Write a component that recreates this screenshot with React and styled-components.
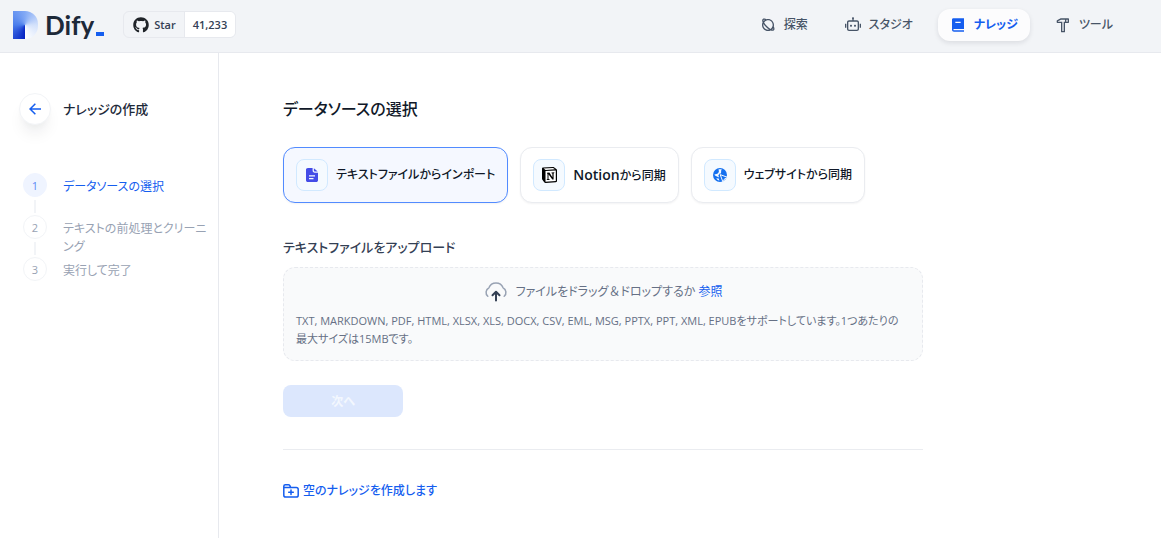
import { useState } from "react";
import styled, { createGlobalStyle, css } from "styled-components";
import { FaGithub } from "react-icons/fa";
import {
  RiArrowLeftLine,
  RiBook2Fill,
  RiHammerLine,
  RiPlanetLine,
  RiRobot2Line,
} from "react-icons/ri";

const NAV_ITEMS = [
  { id: "explore", label: "探索", icon: RiPlanetLine },
  { id: "studio", label: "スタジオ", icon: RiRobot2Line },
  { id: "knowledge", label: "ナレッジ", icon: RiBook2Fill },
  { id: "tools", label: "ツール", icon: RiHammerLine },
];

const STEPS = [
  "データソースの選択",
  "テキストの前処理とクリーニング",
  "実行して完了",
];

const FileIcon = () => (
  <svg width="16" height="16" viewBox="0 0 16 16" aria-hidden="true">
    <path
      fill="#444ce7"
      fillRule="evenodd"
      d="M4 1h4.6v2.6C8.600 4.900 9.500 5.700 10.700 5.700H14V13.200C14 14.300 13.300 15 12.200 15H3.800C2.700 15 2 14.300 2 13.200V2.800C2 1.700 2.700 1 4 1ZM5 8.200v1.200h6V8.200H5Zm0 2.800v1.200h4.500V11H5Z"
    />
    <path fill="#444ce7" d="M9.900 1.200 13.700 4.600H10.700C10.200 4.600 9.900 4.300 9.900 3.800Z" />
  </svg>
);

const NotionIcon = () => (
  <svg width="16" height="16" viewBox="0 0 16 16" aria-hidden="true">
    <path
      fill="#000000"
      d="M1 1.500C1 .9 1.300.6 2 .500L11.800 0c.6 0 1 .1 1.500.5L15.300 2c.5.400.7.700.7 1.300V14c0 .700-.400 1.200-1.200 1.200L4.600 15.900c-.6 0-1-.2-1.400-.7L1.400 12.800C1.100 12.400 1 12 1 11.500Z"
    />
    <path fill="#ffffff" d="M2.600 1.500 12 1l2 1.300L4.600 2.900ZM4.500 4 14.800 3.400V14L4.500 14.700Z" />
    <path
      fill="#000000"
      d="M6 5.800 8.400 5.600 11.400 10.300V6.500L10.500 6.300V5.500L13.300 5.300V6.100L12.600 6.400V12.400L11.300 12.600 7.500 7.200V12L8.600 12.200V12.900L5.700 13.100V12.400L6.500 12.100V6.700L6 6.600Z"
    />
  </svg>
);

const GlobeIcon = () => (
  <svg width="16" height="16" viewBox="0 0 16 16" aria-hidden="true">
    <circle cx="8" cy="8" r="7" fill="#1570ef" />
    <path
      fill="#f5faff"
      d="M6.600 2.200H9.800L9.200 3.600 9 6.600H7.600L6.300 8.600 7.200 10.400 5.400 9.800 3 8.400 2.400 7.400 5.400 6.800 6.900 5ZM4.200 11.200 6.700 11.400 7.400 13.700 5.400 12.800Z"
    />
    <path
      fill="#1570ef"
      stroke="#f5faff"
      strokeWidth="1"
      d="M8.200 7.600 15.700 10.400 12.500 11.900 11 15.200Z"
    />
  </svg>
);

const UploadIcon = () => (
  <svg width="24" height="24" viewBox="0 0 24 24" fill="none" aria-hidden="true">
    <path
      stroke="#98a2b3"
      strokeWidth="1.500"
      strokeLinecap="round"
      d="M3.800 16.300A5.200 5.200 0 0 1 4.900 7.800 7.600 7.600 0 0 1 19.100 7.800 5.200 5.200 0 0 1 20.200 16.300"
    />
    <path
      stroke="#344054"
      strokeWidth="2"
      strokeLinecap="round"
      strokeLinejoin="round"
      d="M12 20.500v-8.500M8.500 15.300 12 11.800l3.500 3.500"
    />
  </svg>
);

const FolderPlusIcon = () => (
  <svg
    width="16"
    height="16"
    viewBox="0 0 16 16"
    fill="none"
    stroke="currentColor"
    strokeWidth="1.500"
    strokeLinecap="round"
    strokeLinejoin="round"
    aria-hidden="true"
  >
    <path d="M.8 4.600V3.300c0-1 .6-1.600 1.600-1.600h3c.6 0 1 .2 1.300.7l1.100 2.200M.8 4.600h12.400c1.200 0 2 .7 2 1.900v5.700c0 1.200-.8 1.900-2 1.900H2.800c-1.200 0-2-.7-2-1.900Z" />
    <path d="M8 7v4.600M5.700 9.300h4.600" />
  </svg>
);

const Header = () => (
  <S.Header>
    <S.Brand>
      <S.LogoMark />
      <S.LogoText>Dify</S.LogoText>
      <S.LogoCursor />
    </S.Brand>
    <S.StarBadge href="#github">
      <S.StarLabel>
        <FaGithub size={16} color="#1f2328" />
        Star
      </S.StarLabel>
      <S.StarCount>41,233</S.StarCount>
    </S.StarBadge>
    <S.Nav>
      {NAV_ITEMS.map(({ id, label, icon: Icon }) => (
        <S.NavLink key={id} href={`#${id}`} $active={id === "knowledge"}>
          <Icon size={16} />
          {label}
        </S.NavLink>
      ))}
    </S.Nav>
  </S.Header>
);

const Sidebar = () => (
  <S.Sidebar>
    <S.SidebarHead>
      <S.BackButton type="button" aria-label="戻る">
        <RiArrowLeftLine size={18} />
      </S.BackButton>
      <S.SidebarTitle>ナレッジの作成</S.SidebarTitle>
    </S.SidebarHead>
    <S.StepList>
      {STEPS.map((step, i) => (
        <S.Step key={step} $active={i === 0}>
          <S.StepTrack>
            <S.StepNumber $active={i === 0}>{i + 1}</S.StepNumber>
            {i < STEPS.length - 1 && <S.StepLine />}
          </S.StepTrack>
          <S.StepText>{step}</S.StepText>
        </S.Step>
      ))}
    </S.StepList>
  </S.Sidebar>
);

const SOURCES = [
  { id: "file", label: "テキストファイルからインポート", icon: <FileIcon /> },
  { id: "notion", brand: "Notion", label: "から同期", icon: <NotionIcon /> },
  { id: "web", label: "ウェブサイトから同期", icon: <GlobeIcon /> },
];

const App = () => {
  const [source, setSource] = useState("file");

  return (
    <>
      <GlobalStyle />
      <S.Page>
        <Header />
        <S.Body>
          <Sidebar />
          <S.Main>
            <S.Content>
              <S.Title>データソースの選択</S.Title>
              <S.SourceList>
                {SOURCES.map(({ id, brand, label, icon }) => (
                  <S.SourceCard
                    key={id}
                    type="button"
                    aria-pressed={source === id}
                    $active={source === id}
                    onClick={() => setSource(id)}
                  >
                    <S.SourceIcon>{icon}</S.SourceIcon>
                    <span>
                      {brand && <S.BrandName>{brand}</S.BrandName>}
                      {label}
                    </span>
                  </S.SourceCard>
                ))}
              </S.SourceList>
              <S.SubTitle>テキストファイルをアップロード</S.SubTitle>
              <S.DropZone>
                <S.DropLine>
                  <UploadIcon />
                  <span>
                    ファイルをドラッグ<S.FullWidth>＆</S.FullWidth>
                    ドロップするか <S.Browse htmlFor="upload">参照</S.Browse>
                  </span>
                  <S.FileInput id="upload" type="file" />
                </S.DropLine>
                <S.DropTip>
                  TXT, MARKDOWN, PDF, HTML, XLSX, XLS, DOCX, CSV, EML, MSG, PPTX,
                  PPT, XML, EPUBをサポートしています。1つあたりの最大サイズは15MBです。
                </S.DropTip>
              </S.DropZone>
              <S.NextButton type="button" disabled>
                次へ
              </S.NextButton>
              <S.Divider />
              <S.EmptyLink href="#empty">
                <FolderPlusIcon />
                空のナレッジを作成します
              </S.EmptyLink>
            </S.Content>
          </S.Main>
        </S.Body>
      </S.Page>
    </>
  );
};

const GlobalStyle = createGlobalStyle`
  *, *::before, *::after {
    box-sizing: border-box;
  }
  body {
    margin: 0;
    background-color: #ffffff;
    color: #101828;
    font-family: "Open Sans", "Noto Sans CJK JP", sans-serif;
    font-feature-settings: "palt";
  }
  button {
    font-family: inherit;
    font-feature-settings: inherit;
  }
  a {
    text-decoration: none;
  }
  svg {
    flex-shrink: 0;
  }
`;

const S = {
  Page: styled.div`
    display: flex;
    flex-direction: column;
    min-height: 100vh;
  `,
  Header: styled.header`
    display: flex;
    align-items: center;
    height: 53px;
    padding: 0 36px 3px 13px;
    background-color: #f2f4f7;
    border-bottom: 1px solid #e7e9ee;
  `,
  Brand: styled.div`
    display: flex;
    align-items: center;
  `,
  LogoMark: styled.div`
    width: 25px;
    height: 28px;
    margin-right: 7px;
    border-radius: 0 13px 13px 0;
    background: conic-gradient(
      from 180deg at 12px 14px,
      #0522c2,
      #4a7dec 90deg,
      #82a9f5 180deg,
      #d3e1fb 270deg,
      #ffffff
    );
  `,
  LogoText: styled.span`
    color: #1d2939;
    font-family: Lato, sans-serif;
    font-size: 26px;
    font-weight: 700;
    line-height: 28px;
  `,
  LogoCursor: styled.span`
    align-self: flex-end;
    width: 8px;
    height: 4px;
    margin: 0 0 3px 2px;
    background-color: #155eef;
  `,
  StarBadge: styled.a`
    display: flex;
    height: 27px;
    margin-left: 19px;
    overflow: hidden;
    border: 1px solid #e7e9ee;
    border-radius: 6px;
    color: #344054;
    font-size: 11px;
    font-weight: 600;
    line-height: 26px;
  `,
  StarLabel: styled.span`
    display: flex;
    align-items: center;
    gap: 5px;
    padding: 0 8px 0 9px;
  `,
  StarCount: styled.span`
    padding: 0 8px;
    background-color: #ffffff;
    border-left: 1px solid #e7e9ee;
  `,
  Nav: styled.nav`
    display: flex;
    gap: 13px;
    margin-left: auto;
  `,
  NavLink: styled.a`
    display: flex;
    align-items: center;
    gap: 8px;
    height: 32px;
    padding: 0 12px;
    border-radius: 12px;
    color: #475467;
    font-size: 12px;
    font-weight: 500;
    line-height: 32px;
    ${({ $active }) =>
      $active &&
      css`
        background-color: #fcfcfd;
        box-shadow: 0 2px 5px rgba(16, 24, 40, 0.1);
        color: #155eef;
        font-weight: 700;
      `}
  `,
  Body: styled.div`
    display: flex;
    flex: 1;
  `,
  Sidebar: styled.aside`
    flex-shrink: 0;
    width: 219px;
    padding: 40px 8px 40px 19px;
    border-right: 1px solid #e7e9ee;
  `,
  SidebarHead: styled.div`
    display: flex;
    align-items: center;
    gap: 12px;
  `,
  BackButton: styled.button`
    display: flex;
    align-items: center;
    justify-content: center;
    width: 32px;
    height: 32px;
    padding: 0;
    background-color: #ffffff;
    border: 1px solid #f2f4f7;
    border-radius: 50%;
    box-shadow: 0 12px 16px -4px rgba(16, 24, 40, 0.08),
      0 4px 6px -2px rgba(16, 24, 40, 0.03);
    color: #155eef;
  `,
  SidebarTitle: styled.h2`
    margin: 0;
    color: #1d2939;
    font-size: 13px;
    font-weight: 500;
    line-height: 18px;
  `,
  StepList: styled.ol`
    margin: 48px 0 0;
    padding: 0 0 0 4px;
    list-style: none;
  `,
  Step: styled.li`
    display: flex;
    gap: 16px;
    min-height: 42px;
    color: ${({ $active }) => ($active ? "#155eef" : "#98a2b3")};
  `,
  StepTrack: styled.div`
    display: flex;
    flex-direction: column;
    align-items: center;
    width: 24px;
  `,
  StepNumber: styled.span`
    width: 24px;
    height: 24px;
    background-color: ${({ $active }) => ($active ? "#eff4ff" : "#ffffff")};
    border: 1px solid ${({ $active }) => ($active ? "#eff4ff" : "#f2f4f7")};
    border-radius: 50%;
    color: ${({ $active }) => ($active ? "#5c8af5" : "#98a2b3")};
    font-size: 11px;
    line-height: 24px;
    text-align: center;
  `,
  StepLine: styled.span`
    flex: 1;
    width: 2px;
    margin: 3px 0 2px;
    background-color: #f2f4f7;
  `,
  StepText: styled.span`
    flex: 1;
    padding-top: 5px;
    font-size: 12px;
    line-height: 18px;
    word-break: break-all;
  `,
  Main: styled.main`
    flex: 1;
    padding: 44px 64px;
  `,
  Content: styled.div`
    max-width: 640px;
  `,
  Title: styled.h1`
    margin: 0 0 26px;
    font-size: 16px;
    font-weight: 500;
    line-height: 24px;
  `,
  SourceList: styled.div`
    display: flex;
    flex-wrap: wrap;
    gap: 12px;
  `,
  SourceCard: styled.button`
    display: flex;
    align-items: center;
    gap: 8px;
    height: 56px;
    padding: 0 12px;
    background-color: ${({ $active }) => ($active ? "#f5f8ff" : "#ffffff")};
    border: 1px solid ${({ $active }) => ($active ? "#528bff" : "#eaecf0")};
    border-radius: 12px;
    box-shadow: 0 1px 2px rgba(16, 24, 40, 0.05);
    color: #101828;
    font-size: 12px;
    font-weight: 500;
    line-height: 18px;
  `,
  BrandName: styled.span`
    font-size: 14px;
    font-weight: 600;
  `,
  SourceIcon: styled.span`
    display: flex;
    align-items: center;
    justify-content: center;
    width: 32px;
    height: 32px;
    background-color: #f5faff;
    border: 1px solid #d1e9ff;
    border-radius: 8px;
  `,
  SubTitle: styled.h2`
    margin: 32px 0 8px;
    color: #344054;
    font-size: 13px;
    font-weight: 500;
    line-height: 24px;
  `,
  DropZone: styled.div`
    padding: 12px;
    background-color: #f9fafb;
    border: 1px dashed #e7e9ee;
    border-radius: 12px;
    color: #667085;
  `,
  DropLine: styled.div`
    display: flex;
    align-items: center;
    justify-content: center;
    gap: 8px;
    margin-bottom: 8px;
    font-size: 12px;
    line-height: 24px;
  `,
  FullWidth: styled.span`
    font-feature-settings: normal;
  `,
  Browse: styled.label`
    color: #155eef;
    cursor: pointer;
  `,
  FileInput: styled.input`
    display: none;
  `,
  DropTip: styled.p`
    margin: 0;
    padding-right: 8px;
    font-size: 11px;
    line-height: 18px;
  `,
  NextButton: styled.button`
    display: block;
    width: 120px;
    height: 32px;
    margin-top: 24px;
    background-color: #dce7fd;
    border: 0;
    border-radius: 8px;
    color: #f3f7fe;
    font-size: 12px;
    font-weight: 700;
  `,
  Divider: styled.hr`
    height: 1px;
    margin: 32px 0;
    background-color: #eaecf0;
    border: 0;
  `,
  EmptyLink: styled.a`
    display: inline-flex;
    align-items: center;
    gap: 4px;
    color: #155eef;
    font-size: 12px;
    font-weight: 500;
    line-height: 18px;
  `,
};

export default App;
